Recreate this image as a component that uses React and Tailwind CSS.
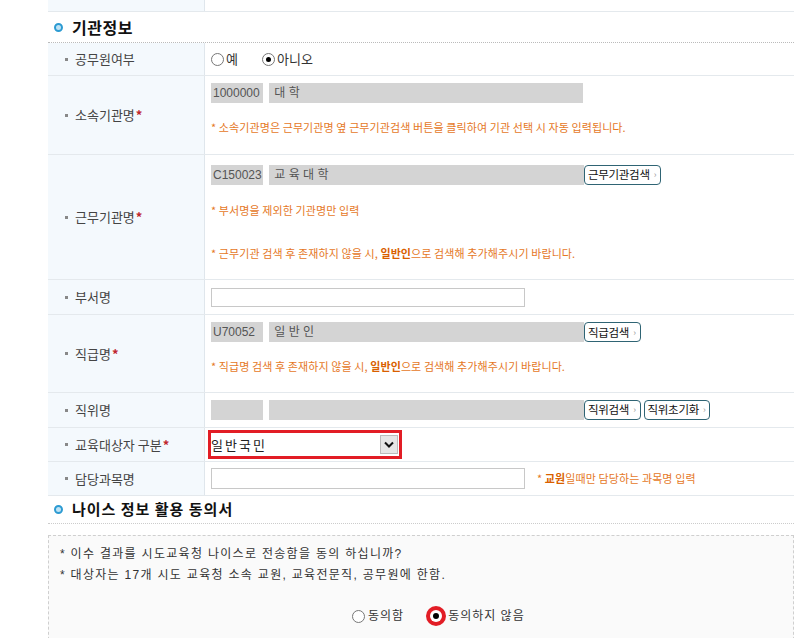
import React from "react";

const kr = { fontFamily: '"Noto Sans CJK KR", "Noto Sans", sans-serif' };
const dotum = { fontFamily: '"Liberation Sans", "Noto Sans CJK KR", sans-serif' };

function Label({ text, required }) {
  return (
    <div className="w-[157px] shrink-0 bg-[#f4f9fd] flex items-center pl-[17px] border-r border-[#dfe6ec] text-[13px] text-[#444]">
      <span className="w-[3px] h-[3px] bg-[#888] mr-[7px]" />
      <span>{text}</span>
      {required && <span className="text-[#c0262d] font-bold ml-[1px]">*</span>}
    </div>
  );
}

function Row({ label, required, h, children, last }) {
  return (
    <div className={`flex ${last ? "" : "border-b border-[#e4e9ed]"}`} style={{ height: h }}>
      <Label text={label} required={required} />
      <div className="flex-1 pl-[6px] flex flex-col justify-center">{children}</div>
    </div>
  );
}

function Gray({ w, children }) {
  return (
    <div
      className="h-[20px] bg-[#d4d4d4] text-[12px] text-[#555] flex items-center px-[2px] shrink-0"
      style={{ width: w, ...dotum }}
    >
      {children}
    </div>
  );
}

function Btn({ children }) {
  return (
    <div className="h-[20px] border border-[#2f6474] rounded-[4px] bg-white text-[11.5px] tracking-[-0.3px] text-[#111] flex items-center pl-[3px] pr-[4px] shrink-0">
      <span>{children}</span>
      <span className="text-[#999] text-[9px] ml-[4px]">›</span>
    </div>
  );
}

function Note({ children, className = "" }) {
  return <div className={`text-[11px] tracking-[0.1px] text-[#e5781f] ${className}`}>{children}</div>;
}

function Radio({ checked }) {
  return (
    <span className="w-[13px] h-[13px] rounded-full border border-[#777] bg-white flex items-center justify-center shrink-0">
      {checked && <span className="w-[5px] h-[5px] rounded-full bg-black" />}
    </span>
  );
}

function Bullet() {
  return <span className="w-[9px] h-[9px] rounded-full border-[2px] border-[#2d9bd2] bg-[#bfe3f5] mr-[9px]" />;
}

export default function App() {
  return (
    <div className="w-[794px] h-[638px] overflow-hidden bg-white" style={kr}>
      <div className="ml-[48px]">
        {/* tail of previous section */}
        <div className="flex h-[12px] border-b border-[#e4e9ed]">
          <div className="w-[157px] bg-[#f4f9fd] border-r border-[#dfe6ec]" />
          <div className="flex-1" />
        </div>

        <div className="flex items-center h-[30px] pl-[6px]">
          <Bullet />
          <span className="text-[16px] font-bold text-[#111] tracking-[0.5px]">기관정보</span>
        </div>

        <div className="border-t border-dotted border-[#bbb]">
          <Row label="공무원여부" h={33}>
            <div className="flex items-center text-[13px] text-[#333]">
              <Radio />
              <span className="ml-[2px] mr-[24px]">예</span>
              <Radio checked />
              <span className="ml-[2px]">아니오</span>
            </div>
          </Row>

          <Row label="소속기관명" required h={79}>
            <div className="flex gap-[6px] -mt-[12px]">
              <Gray w={52}>1000000</Gray>
              <Gray w={314}>&nbsp;대 학</Gray>
            </div>
            <Note className="mt-[16px]">* 소속기관명은 근무기관명 옆 근무기관검색 버튼을 클릭하여 기관 선택 시 자동 입력됩니다.</Note>
          </Row>

          <Row label="근무기관명" required h={125}>
            <div className="flex items-center -mt-[8px]">
              <Gray w={52}>C150023</Gray>
              <div className="w-[6px]" />
              <Gray w={315}>&nbsp;교 육 대 학</Gray>
              <Btn>근무기관검색</Btn>
            </div>
            <Note className="mt-[17px]">* 부서명을 제외한 기관명만 입력</Note>
            <Note className="mt-[27px]">
              * 근무기관 검색 후 존재하지 않을 시, <b className="text-[#d95f00]">일반인</b>으로 검색해 추가해주시기 바랍니다.
            </Note>
          </Row>

          <Row label="부서명" h={35}>
            <div className="w-[314px] h-[19px] border border-[#c8c8c8] bg-white" />
          </Row>

          <Row label="직급명" required h={78}>
            <div className="flex items-center -mt-[10px]">
              <Gray w={52}>U70052</Gray>
              <div className="w-[6px]" />
              <Gray w={315}>&nbsp;일 반 인</Gray>
              <Btn>직급검색</Btn>
            </div>
            <Note className="mt-[16px]">
              * 직급명 검색 후 존재하지 않을 시, <b className="text-[#d95f00]">일반인</b>으로 검색해 추가해주시기 바랍니다.
            </Note>
          </Row>

          <Row label="직위명" h={35}>
            <div className="flex items-center">
              <Gray w={52} />
              <div className="w-[6px]" />
              <Gray w={315} />
              <Btn>직위검색</Btn>
              <div className="w-[3px]" />
              <Btn>직위초기화</Btn>
            </div>
          </Row>

          <Row label="교육대상자 구분" required h={34}>
            <div className="-ml-[3px] w-[194px] h-[29px] border-[3px] border-[#e21d25] flex items-center">
              <div className="flex-1 h-[21px] bg-white flex items-center text-[13px] text-[#222] tracking-[2px]">
                일반국민
              </div>
              <div className="w-[18px] h-[19px] bg-[#e6e6e6] border border-[#bbb] flex items-center justify-center mr-[1px]">
                <svg width="10" height="7" viewBox="0 0 10 7">
                  <path d="M1 1.5 L5 5.5 L9 1.5" fill="none" stroke="#111" strokeWidth="2" />
                </svg>
              </div>
            </div>
          </Row>

          <Row label="담당과목명" h={34}>
            <div className="flex items-center">
              <div className="w-[314px] h-[21px] border border-[#c8c8c8] bg-white" />
              <Note className="ml-[12px]">
                * <b className="text-[#d95f00]">교원</b>일때만 담당하는 과목명 입력
              </Note>
            </div>
          </Row>
        </div>

        <div className="flex items-center h-[28px] pl-[6px] -mt-[1px]">
          <Bullet />
          <span className="text-[15px] font-bold text-[#111] tracking-[1px]">나이스 정보 활용 동의서</span>
        </div>
        <div className="border-t border-dotted border-[#ccc]" />

        <div className="mt-[11px] h-[110px] border border-dashed border-[#cfcfcf] bg-[#fafafa] pt-[8px] pl-[11px]">
          <div className="text-[12px] text-[#333] leading-[21px] tracking-[1.3px]" style={dotum}>
            <div>* 이수 결과를 시도교육청 나이스로 전송함을 동의 하십니까?</div>
            <div>* 대상자는 17개 시도 교육청 소속 교원, 교육전문직, 공무원에 한함.</div>
          </div>
          <div className="flex items-center mt-[20px] ml-[292px] text-[12px] text-[#333] tracking-[1px]" style={dotum}>
            <Radio />
            <span className="ml-[3px] mr-[22px]">동의함</span>
            <span className="w-[20px] h-[20px] rounded-full bg-[#e21d25] flex items-center justify-center">
              <span className="w-[12px] h-[12px] rounded-full bg-white flex items-center justify-center">
                <span className="w-[6px] h-[6px] rounded-full bg-black" />
              </span>
            </span>
            <span className="ml-[2px]">동의하지 않음</span>
          </div>
        </div>
      </div>
    </div>
  );
}
